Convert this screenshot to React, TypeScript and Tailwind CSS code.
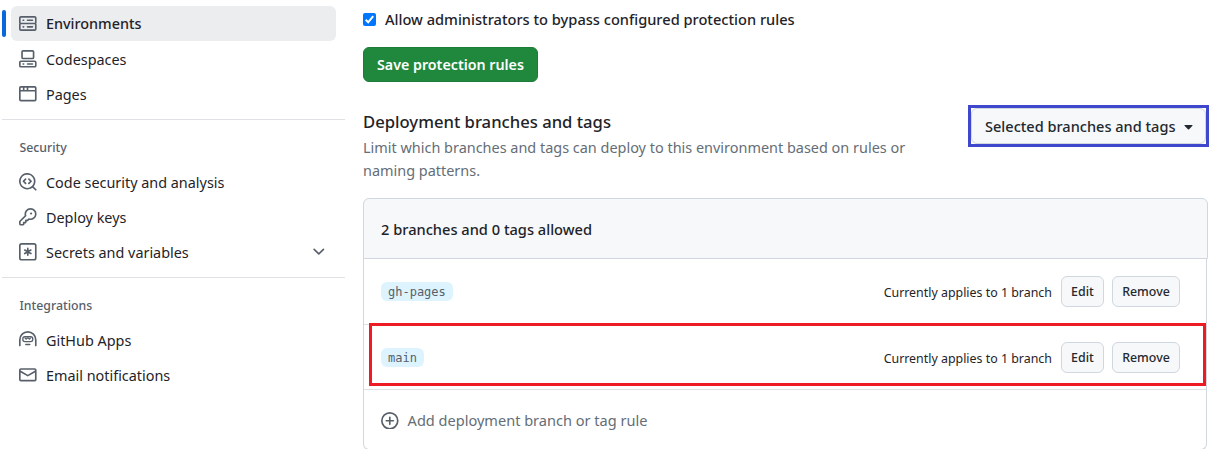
import type { ReactNode } from "react";

const paths = {
  server:
    "M1.75 1h12.5c.966 0 1.75.784 1.75 1.75v4c0 .372-.116.717-.314 1 .198.283.314.628.314 1v4a1.75 1.75 0 0 1-1.75 1.75H1.75A1.75 1.75 0 0 1 0 12.75v-4c0-.358.109-.707.314-1a1.739 1.739 0 0 1-.314-1v-4C0 1.784.784 1 1.75 1ZM1.5 2.75v4c0 .138.112.25.25.25h12.5a.25.25 0 0 0 .25-.25v-4a.25.25 0 0 0-.25-.25H1.75a.25.25 0 0 0-.25.25Zm.25 5.75a.25.25 0 0 0-.25.25v4c0 .138.112.25.25.25h12.5a.25.25 0 0 0 .25-.25v-4a.25.25 0 0 0-.25-.25ZM7 4.75A.75.75 0 0 1 7.75 4h4.5a.75.75 0 0 1 0 1.5h-4.5A.75.75 0 0 1 7 4.75ZM7.75 10h4.5a.75.75 0 0 1 0 1.5h-4.5a.75.75 0 0 1 0-1.5ZM3 4.75A.75.75 0 0 1 3.75 4h.5a.75.75 0 0 1 0 1.5h-.5A.75.75 0 0 1 3 4.75ZM3.75 10h.5a.75.75 0 0 1 0 1.5h-.5a.75.75 0 0 1 0-1.5Z",
  codespaces:
    "M0 11.25c0-.966.784-1.75 1.75-1.75h12.5c.966 0 1.75.784 1.75 1.75v3A1.75 1.75 0 0 1 14.25 16H1.75A1.75 1.75 0 0 1 0 14.25Zm2-9.5C2 .784 2.784 0 3.75 0h8.5C13.216 0 14 .784 14 1.75v5a1.75 1.75 0 0 1-1.75 1.75h-8.5A1.75 1.75 0 0 1 2 6.75Zm1.75-.25a.25.25 0 0 0-.25.25v5c0 .138.112.25.25.25h8.5a.25.25 0 0 0 .25-.25v-5a.25.25 0 0 0-.25-.25Zm-2 9.5a.25.25 0 0 0-.25.25v3c0 .138.112.25.25.25h12.5a.25.25 0 0 0 .25-.25v-3a.25.25 0 0 0-.25-.25ZM7 12.75a.75.75 0 0 1 .75-.75h4.5a.75.75 0 0 1 0 1.5h-4.5a.75.75 0 0 1-.75-.75Zm-4 0a.75.75 0 0 1 .75-.75h.5a.75.75 0 0 1 0 1.5h-.5a.75.75 0 0 1-.75-.75Z",
  browser:
    "M0 2.75C0 1.784.784 1 1.75 1h12.5c.966 0 1.75.784 1.75 1.75v10.5A1.75 1.75 0 0 1 14.25 15H1.75A1.75 1.75 0 0 1 0 13.25ZM14.5 6h-13v7.25c0 .138.112.25.25.25h12.5a.25.25 0 0 0 .25-.25Zm-6-3.5v2h6V2.75a.25.25 0 0 0-.25-.25ZM5 2.5v2h2v-2Zm-3.25 0a.25.25 0 0 0-.25.25V4.5h2v-2Z",
  codescan:
    "M8.47 4.97a.75.75 0 0 0 0 1.06L9.94 7.5 8.47 8.97a.75.75 0 1 0 1.06 1.06l2-2a.75.75 0 0 0 0-1.06l-2-2a.75.75 0 0 0-1.06 0ZM6.53 6.03a.75.75 0 0 0-1.06-1.06l-2 2a.75.75 0 0 0 0 1.06l2 2a.75.75 0 1 0 1.06-1.06L5.06 7.5l1.47-1.47ZM12.246 13.307a7.501 7.501 0 1 1 1.06-1.06l2.474 2.473a.749.749 0 1 1-1.06 1.06ZM1.5 7.5a6.002 6.002 0 0 0 3.608 5.504 6.002 6.002 0 0 0 6.486-1.117.748.748 0 0 1 .292-.293A6 6 0 1 0 1.5 7.5Z",
  key: "M10.5 0a5.499 5.499 0 1 1-1.288 10.848l-.932.932a.749.749 0 0 1-.53.22H7v.75a.749.749 0 0 1-.22.53l-.5.5a.749.749 0 0 1-.53.22H5v.75a.749.749 0 0 1-.22.53l-.5.5a.749.749 0 0 1-.53.22h-2A1.75 1.75 0 0 1 0 14.25v-2c0-.199.079-.389.22-.53l4.932-4.932A5.5 5.5 0 0 1 10.5 0Zm-4 5.5c-.001.431.069.86.205 1.269a.75.75 0 0 1-.181.768L1.5 12.56v1.69c0 .138.112.25.25.25h1.69l.06-.06v-1.19a.75.75 0 0 1 .75-.75h1.19l.06-.06v-1.19a.75.75 0 0 1 .75-.75h1.19l1.023-1.025a.75.75 0 0 1 .768-.18A4 4 0 1 0 6.5 5.5ZM11 6a1 1 0 1 1 0-2 1 1 0 0 1 0 2Z",
  mail: "M1.75 2h12.5c.966 0 1.75.784 1.75 1.75v8.5A1.75 1.75 0 0 1 14.25 14H1.75A1.75 1.75 0 0 1 0 12.25v-8.5C0 2.784.784 2 1.75 2ZM1.5 12.251c0 .138.112.25.25.25h12.5a.25.25 0 0 0 .25-.25V5.809L8.38 9.397a.75.75 0 0 1-.76 0L1.5 5.809v6.442Zm13-8.181v-.32a.25.25 0 0 0-.25-.25H1.75a.25.25 0 0 0-.25.25v.32L8 7.88Z",
  plus: "M8 0a8 8 0 1 1 0 16A8 8 0 0 1 8 0ZM1.5 8a6.5 6.5 0 1 0 13 0 6.5 6.5 0 0 0-13 0Zm7.25-3.25v2.5h2.5a.75.75 0 0 1 0 1.5h-2.5v2.5a.75.75 0 0 1-1.5 0v-2.5h-2.5a.75.75 0 0 1 0-1.5h2.5v-2.5a.75.75 0 0 1 1.5 0Z",
  chevron:
    "M12.78 5.22a.749.749 0 0 1 0 1.06l-4.25 4.25a.749.749 0 0 1-1.06 0L3.22 6.28a.749.749 0 1 1 1.06-1.06L8 8.939l3.72-3.719a.749.749 0 0 1 1.06 0Z",
};

function Svg({ children }: { children: ReactNode }) {
  return (
    <svg viewBox="0 0 16 16" className="size-[17.6px] shrink-0 fill-[#57606a]" aria-hidden="true">
      {children}
    </svg>
  );
}

function Icon({ name }: { name: keyof typeof paths }) {
  return (
    <Svg>
      <path fillRule="evenodd" d={paths[name]} />
    </Svg>
  );
}

function AsteriskIcon() {
  return (
    <Svg>
      <g className="fill-none stroke-[#57606a]" strokeWidth="1.5" strokeLinecap="round">
        <rect x="0.75" y="0.75" width="14.5" height="14.5" rx="1.6" />
        <path d="M8 4.9v6.2M5.2 6.4l5.6 3.2M10.8 6.4 5.2 9.6" strokeWidth="1.5" />
      </g>
    </Svg>
  );
}

function HubotIcon() {
  return (
    <Svg>
      <path d="M0 8a8 8 0 1 1 16 0v5.25a.75.75 0 0 1-1.5 0V8a6.5 6.5 0 1 0-13 0v5.25a.75.75 0 0 1-1.5 0Zm5.5 4.25a.75.75 0 0 1 .75-.75h3.5a.75.75 0 0 1 0 1.5h-3.5a.75.75 0 0 1-.75-.75Z" />
      <g className="fill-none stroke-[#57606a]" strokeWidth="1.2" strokeLinejoin="round">
        <rect x="3.5" y="5.2" width="9" height="4.4" rx="1.8" />
        <path d="M5.2 6.1 6.4 7.5 8 6.1l1.6 1.4 1.2-1.4" strokeWidth="1" />
      </g>
    </Svg>
  );
}

function NavItem({ icon, label, active, expandable }: { icon: ReactNode; label: string; active?: boolean; expandable?: boolean }) {
  return (
    <div className="flex h-[35px] items-center">
      {active ? <div className="h-[27px] w-1 rounded-full bg-[#0969da]" /> : <div className="w-1" />}
      <div
        className={
          active
            ? "ml-[5px] flex h-full w-[325px] items-center rounded-md bg-[#ecedef] pl-2 font-medium"
            : "ml-[5px] flex h-full w-[325px] items-center pl-2"
        }
      >
        <span className={active ? "flex" : "flex pb-px"}>{icon}</span>
        <span className="ml-[9.4px] flex-1 pt-[1.5px] text-[14.4px]">{label}</span>
        {expandable && (
          <span className="mr-2 flex pb-px">
            <Icon name="chevron" />
          </span>
        )}
      </div>
    </div>
  );
}

function NavHeading({ children }: { children: string }) {
  return <h3 className="flex h-[19px] items-center pt-[1.5px] pl-[17.5px] text-[12.3px] font-medium text-[#57606a]">{children}</h3>;
}

function SmallButton({ children }: { children: string }) {
  return (
    <button className="h-[31px] rounded-md border border-[#d0d7de] bg-[#f6f8fa] px-[9.2px] pt-0.5 text-[12.4px] font-medium text-[#24292f]">
      {children}
    </button>
  );
}

function RuleRow({ name }: { name: string }) {
  return (
    <div className="flex items-center pr-[26px] pl-[17px]">
      <code className="flex h-[19px] items-center rounded-md bg-[#ddf4ff] px-[7px] pt-px font-['DejaVu_Sans_Mono',monospace] text-[12px] text-[#57606a]">
        {name}
      </code>
      <div className="ml-auto flex items-center">
        <span className="mr-[9px] pt-[3px] text-[12.4px]">Currently applies to 1 branch</span>
        <div className="flex gap-2">
          <SmallButton>Edit</SmallButton>
          <SmallButton>Remove</SmallButton>
        </div>
      </div>
    </div>
  );
}

export default function App() {
  return (
    <div className="flex h-[449px] w-[1211px] overflow-hidden bg-white font-['Noto_Sans',sans-serif] leading-none whitespace-nowrap text-[#1f2328]">
      <aside className="ml-0.5 w-[343px] shrink-0">
        <nav className="pt-1.5">
          <NavItem icon={<Icon name="server" />} label="Environments" active />
          <div className="h-px" />
          <NavItem icon={<Icon name="codespaces" />} label="Codespaces" />
          <NavItem icon={<Icon name="browser" />} label="Pages" />
        </nav>
        <div className="mt-[7px] border-t border-[#dfe1e4] pt-[18px]">
          <NavHeading>Security</NavHeading>
          <div className="pt-2">
            <NavItem icon={<Icon name="codescan" />} label="Code security and analysis" />
            <NavItem icon={<Icon name="key" />} label="Deploy keys" />
            <NavItem icon={<AsteriskIcon />} label="Secrets and variables" expandable />
          </div>
        </div>
        <div className="mt-[7px] border-t border-[#dfe1e4] pt-[18px]">
          <NavHeading>Integrations</NavHeading>
          <div className="pt-2">
            <NavItem icon={<HubotIcon />} label="GitHub Apps" />
            <NavItem icon={<Icon name="mail" />} label="Email notifications" />
          </div>
        </div>
      </aside>

      <main className="ml-[18px] w-[848px] shrink-0">
        <div className="flex h-[47px] items-start pt-[9px]">
          <div className="flex h-5 items-center">
            <span className="flex size-[13px] items-center justify-center rounded-[2px] bg-[#0075ff]">
              <svg viewBox="0 0 13 13" className="size-[13px] fill-none stroke-white" strokeWidth="2">
                <path d="m2.7 6.8 2.5 2.5 5-6.2" />
              </svg>
            </span>
            <span className="ml-[9px] text-[14.62px] font-medium">Allow administrators to bypass configured protection rules</span>
          </div>
        </div>
        <button className="flex h-[35px] w-[175px] items-center justify-center rounded-md border border-[#1c7c38] bg-[#1f883d] pt-px text-[14.25px] font-semibold text-white">
          Save protection rules
        </button>

        <div className="flex h-[116px] justify-between pt-[23px]">
          <div className="pt-[5px]">
            <h2 className="flex h-6 items-center text-[16.65px] font-medium">Deployment branches and tags</h2>
            <p className="pt-0.5 text-[14.45px] leading-[23px] text-[#656d76]">
              Limit which branches and tags can deploy to this environment based on rules or
              <br />
              naming patterns.
            </p>
          </div>
          <div className="mr-0.5 h-[42px] w-[241px] border-3 border-[#3f48cc]">
            <button className="flex h-full w-full items-center rounded-md border border-[#d0d7de] bg-[#f6f8fa] pl-[13px] text-[14.55px] font-medium text-[#24292f]">
              Selected branches and tags
              <svg viewBox="0 0 10 6" className="mt-0.5 ml-2 h-[5px] w-[9px] fill-[#24292f]">
                <path d="M.6 0h8.8a.5.5 0 0 1 .35.85L5.4 5.3a.56.56 0 0 1-.8 0L.25.85A.5.5 0 0 1 .6 0Z" />
              </svg>
            </button>
          </div>
        </div>

        <section className="relative w-[845px]">
          <div className="flex h-[61px] items-center rounded-t-md border border-[#d0d7de] bg-[#f6f8fa] pt-0.5 pl-[17px] text-[14.63px] font-medium">
            2 branches and 0 tags allowed
          </div>
          <div className="grid h-[191px] w-[844px] grid-rows-[66px_65px_59px] rounded-b-md border border-t-0 border-[#d0d7de]">
            <div className="grid border-b border-[#dfe1e4]">
              <RuleRow name="gh-pages" />
            </div>
            <div className="grid border-b border-[#dfe1e4] pt-px">
              <RuleRow name="main" />
            </div>
            <div className="flex items-center pt-0.5 pl-[17px] text-[14.55px] text-[#656d76]">
              <Icon name="plus" />
              <span className="ml-[9px]">Add deployment branch or tag rule</span>
            </div>
          </div>
          <div className="pointer-events-none absolute top-[125px] left-1.5 h-[63px] w-[837px] border-3 border-[#ed1c24]" />
        </section>
      </main>
    </div>
  );
}
